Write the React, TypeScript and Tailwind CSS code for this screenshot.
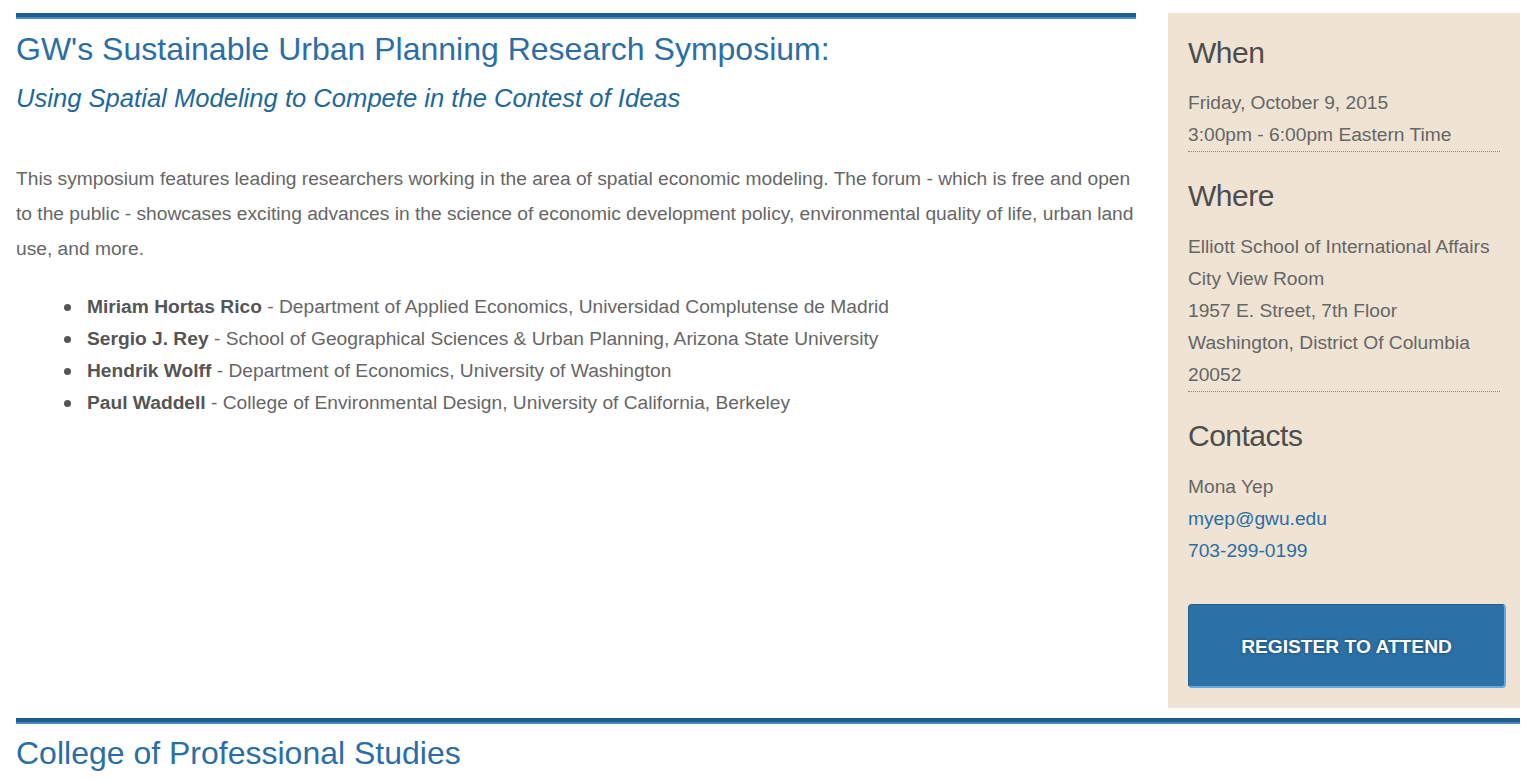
const speakers = [
  { name: "Miriam Hortas Rico", org: "Department of Applied Economics, Universidad Complutense de Madrid" },
  { name: "Sergio J. Rey", org: "School of Geographical Sciences & Urban Planning, Arizona State University" },
  { name: "Hendrik Wolff", org: "Department of Economics, University of Washington" },
  { name: "Paul Waddell", org: "College of Environmental Design, University of California, Berkeley" },
];

const BlueBar = () => (
  <div>
    <div className="h-[4px] bg-[#1f5d90]" />
    <div className="h-[2px] bg-[#4a8ac2]" />
  </div>
);

const SideHeading = ({ children }: { children: React.ReactNode }) => (
  <h3 className="text-[30px] leading-[34px] text-[#4d4d4d] tracking-[-0.5px]">{children}</h3>
);

export default function App() {
  return (
    <div className="min-h-screen bg-white px-4 pt-[13px] font-['Liberation_Sans',Arial,sans-serif]">
      <div className="flex items-start gap-8">
        <main className="flex-1">
          <BlueBar />
          <h1 className="mt-[12px] text-[32px] leading-[36px] text-[#2b6ea6]">
            GW's Sustainable Urban Planning Research Symposium:
          </h1>
          <h2 className="mt-[16px] text-[25.6px] leading-[30px] italic text-[#1d6899]">
            Using Spatial Modeling to Compete in the Contest of Ideas
          </h2>
          <p className="mt-[48px] text-[19.2px] leading-[35px] text-[#666]">
            This symposium features leading researchers working in the area of spatial economic modeling. The forum - which is free and open to the public - showcases exciting advances in the science of economic development policy, environmental quality of life, urban land use, and more.
          </p>
          <ul className="mt-[25px] pl-[48px] text-[19.2px] leading-[32px] text-[#666]">
            {speakers.map((s) => (
              <li key={s.name} className="flex items-center">
                <span className="mr-[16px] h-[7px] w-[7px] shrink-0 rounded-full bg-[#555]" />
                <span>
                  <strong className="font-bold text-[#555]">{s.name}</strong> - {s.org}
                </span>
              </li>
            ))}
          </ul>
        </main>

        <aside className="w-[352px] shrink-0 bg-[#efe3d3] px-5 pt-[23px] pb-5">
          <SideHeading>When</SideHeading>
          <div className="mt-[17px] border-b border-dotted border-[#8a8a8a] text-[19.2px] leading-[32px] text-[#666]">
            <div>Friday, October 9, 2015</div>
            <div>3:00pm - 6:00pm Eastern Time</div>
          </div>

          <div className="mt-[27px]">
            <SideHeading>Where</SideHeading>
          </div>
          <div className="mt-[18px] border-b border-dotted border-[#8a8a8a] text-[19.2px] leading-[32px] text-[#666]">
            <div>Elliott School of International Affairs</div>
            <div>City View Room</div>
            <div>1957 E. Street, 7th Floor</div>
            <div>Washington, District Of Columbia</div>
            <div>20052</div>
          </div>

          <div className="mt-[27px]">
            <SideHeading>Contacts</SideHeading>
          </div>
          <div className="mt-[18px] text-[19.2px] leading-[32px] text-[#666]">
            <div>Mona Yep</div>
            <div className="text-[#2b6ea6]">myep@gwu.edu</div>
            <div className="text-[#2b6ea6]">703-299-0199</div>
          </div>

          <button className="mt-[37px] flex h-[84px] w-[318px] items-center justify-center rounded-[4px] border border-[#245f8f] border-r-2 border-b-2 border-r-[#62aae4] border-b-[#62aae4] bg-[#2b70a7] pt-1 text-[19.2px] font-bold text-white [text-shadow:0_0_3px_rgba(0,0,0,0.45)]">
            REGISTER TO ATTEND
          </button>
        </aside>
      </div>

      <div className="mt-[10px]">
        <BlueBar />
      </div>
      <h2 className="mt-[11px] text-[32px] leading-[36px] text-[#2b6ea6]">College of Professional Studies</h2>
    </div>
  );
}
